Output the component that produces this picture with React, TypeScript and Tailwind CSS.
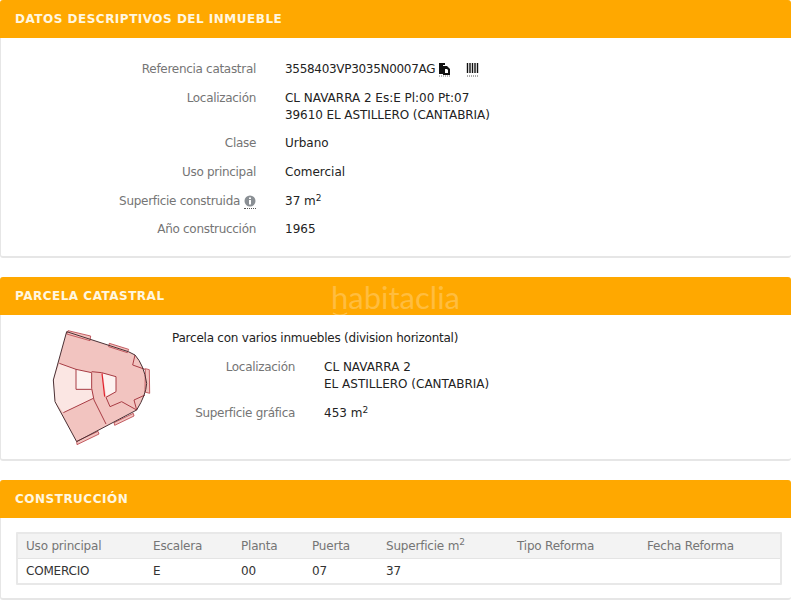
import React from 'react';

const FONT = 'font-["DejaVu_Sans",Verdana,sans-serif]';

const CopyIcon = () => (
  <svg width="13" height="14" viewBox="0 0 13 14" className="ml-[3px]">
    <path d="M1 0h6v2H5v9H1z" fill="#111" />
    <path d="M5 3h4l3 3v6H5z" fill="#111" />
    <path d="M7 6h2l1 1v3H7z" fill="#fff" />
    <path d="M1 13h11" stroke="#777" strokeDasharray="1 1" />
  </svg>
);

const BarcodeIcon = () => (
  <svg width="14" height="14" viewBox="0 0 14 14" className="ml-[15px]">
    <path d="M1.500 0v10M4 0v10M6.500 0v10M9 0v10M11.500 0v10" stroke="#111" strokeWidth="1.400" />
    <path d="M1 13h12" stroke="#555" strokeDasharray="1 1" />
  </svg>
);

const InfoIcon = () => (
  <span className="ml-1 inline-flex border-b border-dotted border-[#555] pb-px">
    <svg width="12" height="12" viewBox="0 0 12 12">
      <circle cx="6" cy="6" r="5.500" fill="#8a8f94" />
      <rect x="5" y="5" width="2" height="4.500" fill="#fff" />
      <rect x="5" y="2.500" width="2" height="1.500" fill="#fff" />
    </svg>
  </span>
);

const OUTLINE = 'M200 35L385 95L405 105Q432 135 440 190Q438 225 410 270L230 365L165 245L160 180Z';

const ParcelMap = () => (
  <svg width="170" height="135" viewBox="0 0 510 405" className="-ml-px shrink-0">
    {/* main plot */}
    <path d={OUTLINE} fill="#f2c4c0" />
    <path d="M178 130L160 180L165 245L190 278L280 235L275 210L228 208L228 148L178 130Z" fill="#fbe6e3" />
    <path d="M228 148L275 158L275 210L228 208Z" fill="#fdf2f0" />
    <path d="M308 160L348 170L348 215L318 228Z" fill="#fdf2f0" />
    {/* side annexes */}
    <g fill="#f3c4c0" stroke="#b8444c" strokeWidth="2.500">
      <path d="M204 32L272 48L270 62L200 42Z" />
      <path d="M328 70L386 88L382 98L326 80Z" />
      <path d="M436 146L448 149L449 220L435 216Z" />
      <path d="M342 308L400 280L402 288L344 316Z" />
      <path d="M230 364L294 334L297 342L231 374Z" />
    </g>
    {/* inner walls */}
    <g fill="none" stroke="#a83c44" strokeWidth="3">
      <path d="M178 130L228 148L275 158M228 148V208H275M190 278L280 235" />
      <path d="M275 158V205L282 240L318 312" />
      <path d="M275 155L305 158L348 170V215L318 232L330 260L365 245L410 270" />
      <path d="M398 135L405 105M398 135L435 148" />
      <path d="M402 240L435 225M402 240L410 270" />
    </g>
    <path d="M306 160L314 230" fill="none" stroke="#e2202c" strokeWidth="3.500" />
    {/* outline */}
    <path d={OUTLINE} fill="none" stroke="#4a3034" strokeWidth="3" />
  </svg>
);

const Card = ({ title, className, children }: { title: string; className: string; children: React.ReactNode }) => (
  <section className={`rounded-[3px] border-b-2 border-l border-[#e6e6e6] bg-white ${className}`}>
    <h2 className="-ml-px flex h-[38px] items-center rounded-t-[3px] bg-[#ffa800] pl-[15px] text-[12px] font-bold tracking-[0.5px] text-[#fff7e0]">
      {title}
    </h2>
    {children}
  </section>
);

const Row = ({ label, extra, children, className = '' }: { label: string; extra?: React.ReactNode; children: React.ReactNode; className?: string }) => (
  <div className={`flex ${className}`}>
    <div className="flex w-[255px] shrink-0 items-center justify-end tracking-[-0.3px] text-[#757575]">
      {label}
      {extra}
    </div>
    <div className="ml-[29px] text-[#222]">{children}</div>
  </div>
);

const COLS = 'grid grid-cols-[127px_88px_71px_74px_131px_130px_1fr] pl-[8px]';

const App: React.FC = () => {
  return (
    <div className={`${FONT} relative h-[600px] w-[791px] overflow-hidden bg-white text-[12px] leading-[17px]`}>
      <Card title="DATOS DESCRIPTIVOS DEL INMUEBLE" className="h-[258px]">
        <div className="pt-[23px]">
          <Row label="Referencia catastral">
            <div className="flex items-center">
              <span className="tracking-[-0.3px]">3558403VP3035N0007AG</span>
              <CopyIcon />
              <BarcodeIcon />
            </div>
          </Row>
          <Row label="Localización" className="mt-[12px] items-start">
            <span className="tracking-[-0.02px]">CL NAVARRA 2 Es:E Pl:00 Pt:07</span>
            <br />
            <span className="tracking-[-0.08px]">39610 EL ASTILLERO (CANTABRIA)</span>
          </Row>
          <Row label="Clase" className="mt-[11px]">Urbano</Row>
          <Row label="Uso principal" className="mt-[12px]">Comercial</Row>
          <Row label="Superficie construida" extra={<InfoIcon />} className="mt-[12px]">
            37 m<sup className="text-[9px]">2</sup>
          </Row>
          <Row label="Año construcción" className="mt-[11px]">1965</Row>
        </div>
      </Card>

      <Card title="PARCELA CATASTRAL" className="mt-[19px] h-[184px]">
        <div className="flex">
          <div className="pt-[5px]">
            <ParcelMap />
          </div>
          <div className="ml-[2px] pt-[15px] text-[#222]">
            <span className="tracking-[-0.23px]">Parcela con varios inmuebles (division horizontal)</span>
            <div className="mt-[12px] flex">
              <div className="w-[123px] text-right tracking-[-0.3px] text-[#757575]">Localización</div>
              <div className="ml-[29px]">
                CL NAVARRA 2
                <br />
                EL ASTILLERO (CANTABRIA)
              </div>
            </div>
            <div className="mt-[12px] flex">
              <div className="w-[123px] text-right tracking-[-0.3px] text-[#757575]">Superficie gráfica</div>
              <div className="ml-[29px]">
                453 m<sup className="text-[9px]">2</sup>
              </div>
            </div>
          </div>
        </div>
      </Card>

      <Card title="CONSTRUCCIÓN" className="mt-[19px] h-[120px]">
        <div className="ml-[15px] mr-[9px] mt-[14px] rounded-[1px] border-2 border-[#e8e8e8] tracking-[-0.2px]">
          <div className={`${COLS} h-[25px] items-center border-b border-[#e4e4e4] bg-[#f3f3f3] text-[#757575]`}>
            <span>Uso principal</span>
            <span>Escalera</span>
            <span>Planta</span>
            <span>Puerta</span>
            <span>
              Superficie m<sup className="text-[9px]">2</sup>
            </span>
            <span>Tipo Reforma</span>
            <span>Fecha Reforma</span>
          </div>
          <div className={`${COLS} h-[24px] items-center text-[#333]`}>
            <span>COMERCIO</span>
            <span>E</span>
            <span>00</span>
            <span>07</span>
            <span>37</span>
            <span />
            <span />
          </div>
        </div>
      </Card>

      {/* watermark */}
      <div className="absolute left-[331px] top-[278px] font-['Lato',sans-serif] text-[31px] leading-[38px] text-white/25">
        habitaclia
      </div>
      <svg width="16" height="5" viewBox="0 0 16 5" className="absolute left-[332px] top-[312px]">
        <path d="M1 1c4 3 10 3 14 0" fill="none" stroke="#fff" strokeOpacity="0.3" strokeWidth="1.500" />
      </svg>
    </div>
  );
};

export default App;
